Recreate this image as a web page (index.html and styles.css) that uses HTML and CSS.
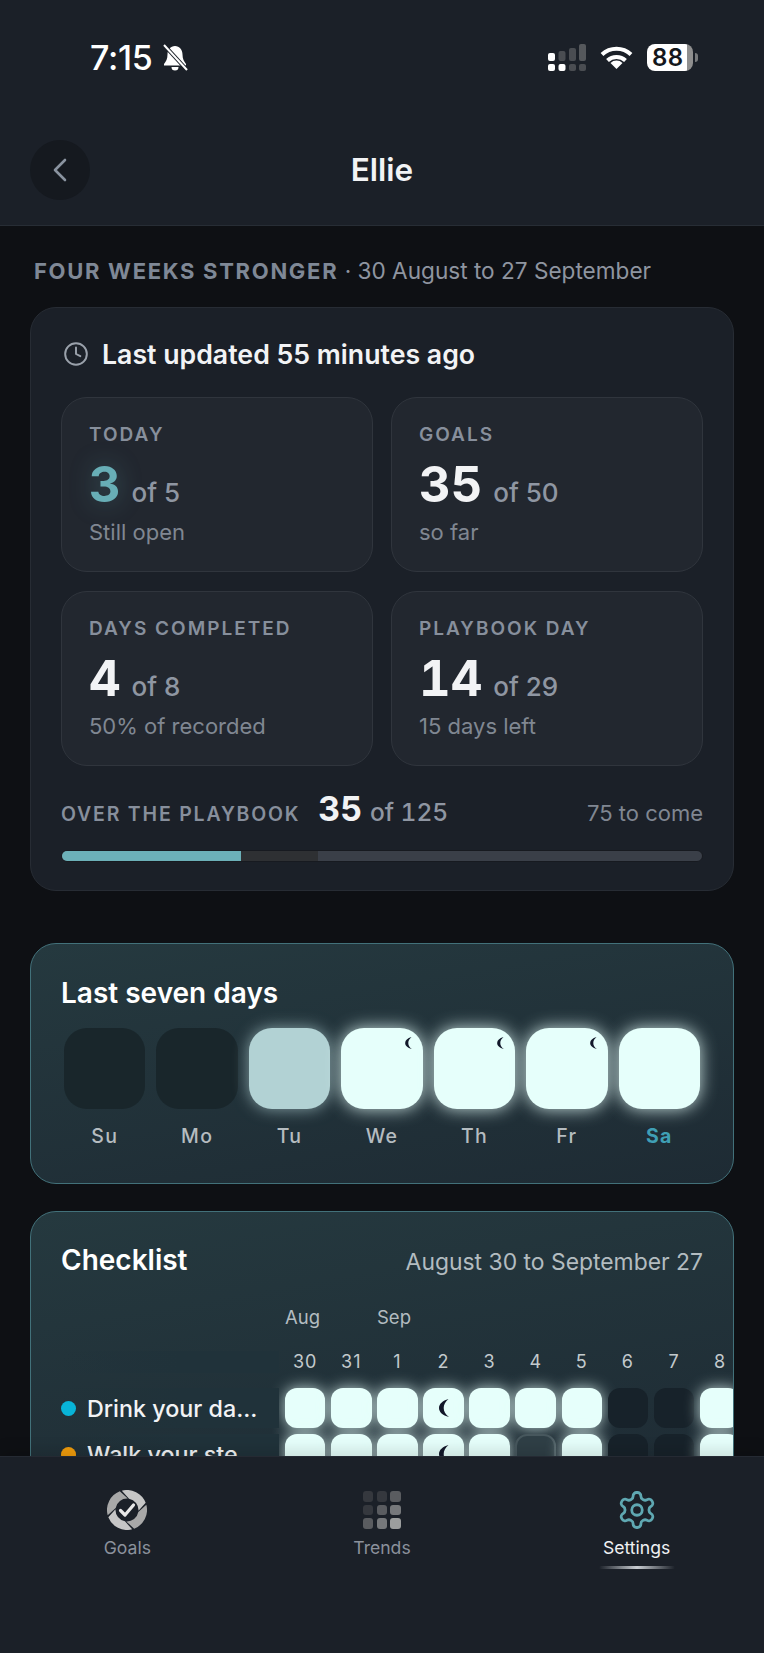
FILE: index.html
```html
<!DOCTYPE html>
<html lang="en">
<head>
  <meta charset="UTF-8">
  <meta name="viewport" content="width=device-width, initial-scale=1.0">
  <title>Ellie</title>
  <link rel="stylesheet" href="styles.css">
</head>
<body>
  <svg class="defs" width="0" height="0">
    <symbol id="moon" viewBox="0 0 10 18">
      <path d="M9.5 0C3.5 1.8 0 5 0 9c0 4 3.500 7.400 10 9-3.600-2.600-5.300-5.600-5.300-9 0-3.400 1.700-6.300 4.800-9z"/>
    </symbol>
  </svg>

  <div class="app">
    <header class="top">
      <div class="status">
        <div class="status-left">
          <span class="time">7:15</span>
          <svg class="bell" viewBox="0 0 26 27">
            <path fill="#fff" d="M13 2C8.500 2 5.500 5.800 5.500 10.500c0 4.500-1.500 6.800-3.500 9.500v1.500h22V20c-2-2.700-3.500-5-3.500-9.500C20.500 5.800 17.500 2 13 2z"/>
            <path fill="#fff" d="M9.500 23h7a3.500 3.500 0 0 1-7 0z"/>
            <path stroke="#1b2028" stroke-width="4" d="M2 1l23 25"/>
            <path stroke="#fff" stroke-width="2" d="M2 1l23 25"/>
          </svg>
        </div>
        <div class="status-right">
          <svg class="signal" viewBox="0 0 38 27">
            <rect x="0" y="9" width="7" height="8" rx="2" fill="#fff"/>
            <rect x="10.500" y="7" width="7" height="10" rx="2" fill="#4a4d52"/>
            <rect x="21" y="4" width="7" height="13" rx="2" fill="#4a4d52"/>
            <rect x="31" y="0" width="7" height="17" rx="2" fill="#55585c"/>
            <rect x="0" y="20" width="7" height="7" rx="2" fill="#fff"/>
            <rect x="10.500" y="20" width="7" height="7" rx="2" fill="#fff"/>
            <rect x="21" y="20" width="7" height="7" rx="2" fill="#4a4d52"/>
            <rect x="31" y="20" width="7" height="7" rx="2" fill="#4a4d52"/>
          </svg>
          <svg class="wifi" viewBox="0 0 33 24" fill="none" stroke="#fff" stroke-width="4">
            <path d="M2 9.500a21 21 0 0 1 29 0"/>
            <path d="M7.500 15.500a13 13 0 0 1 18 0"/>
            <path fill="#fff" stroke="none" d="M16.500 24l-6-6a8.500 8.500 0 0 1 12 0z"/>
          </svg>
          <div class="battery">
            <span class="battery-body">88</span>
            <span class="battery-nub"></span>
          </div>
        </div>
      </div>
      <div class="bar">
        <button class="back">
          <svg width="16" height="24" viewBox="0 0 16 24" fill="none" stroke="#8a93a0" stroke-width="2.600" stroke-linecap="round" stroke-linejoin="round"><path d="M13 2L3 12l10 10"/></svg>
        </button>
        <h1>Ellie</h1>
      </div>
    </header>

    <main class="content">
      <p class="heading"><b>FOUR WEEKS STRONGER</b> · 30 August to 27 September</p>

      <section class="card summary">
        <div class="updated">
          <svg width="26" height="26" viewBox="0 0 24 24" fill="none" stroke="#9aa1ab" stroke-width="1.800" stroke-linecap="round" stroke-linejoin="round"><circle cx="12" cy="12" r="10"/><path d="M12 6v6l4 2"/></svg>
          <span>Last updated 55 minutes ago</span>
        </div>

        <div class="tiles">
          <div class="tile">
            <div class="tile-label">TODAY</div>
            <div class="tile-num"><b class="teal">3</b> of 5</div>
            <div class="tile-sub">Still open</div>
          </div>
          <div class="tile">
            <div class="tile-label">GOALS</div>
            <div class="tile-num"><b>35</b> of 50</div>
            <div class="tile-sub">so far</div>
          </div>
          <div class="tile">
            <div class="tile-label">DAYS COMPLETED</div>
            <div class="tile-num"><b>4</b> of 8</div>
            <div class="tile-sub">50% of recorded</div>
          </div>
          <div class="tile">
            <div class="tile-label">PLAYBOOK DAY</div>
            <div class="tile-num"><b>14</b> of 29</div>
            <div class="tile-sub">15 days left</div>
          </div>
        </div>

        <div class="over">
          <span class="over-label">OVER THE PLAYBOOK</span>
          <span class="over-num"><b>35</b> of 125</span>
          <span class="over-left">75 to come</span>
        </div>
        <div class="progress">
          <div class="progress-fill" style="width: 28%"></div>
          <div class="progress-due" style="width: 12%"></div>
        </div>
      </section>

      <section class="card glass week">
        <h2>Last seven days</h2>
        <div class="days">
          <div class="day"><div class="day-box"></div><span>Su</span></div>
          <div class="day"><div class="day-box"></div><span>Mo</span></div>
          <div class="day"><div class="day-box part"></div><span>Tu</span></div>
          <div class="day"><div class="day-box full"><svg class="moon-small"><use href="#moon"/></svg></div><span>We</span></div>
          <div class="day"><div class="day-box full"><svg class="moon-small"><use href="#moon"/></svg></div><span>Th</span></div>
          <div class="day"><div class="day-box full"><svg class="moon-small"><use href="#moon"/></svg></div><span>Fr</span></div>
          <div class="day today"><div class="day-box full"></div><span>Sa</span></div>
        </div>
      </section>

      <section class="card glass checklist">
        <div class="check-head">
          <h2>Checklist</h2>
          <span>August 30 to September 27</span>
        </div>
        <div class="months"><span class="month-aug">Aug</span><span>Sep</span></div>
        <div class="row dates">
          <div class="row-label"></div>
          <span>30</span><span>31</span><span>1</span><span>2</span><span>3</span><span>4</span><span>5</span><span>6</span><span>7</span><span>8</span>
        </div>
        <div class="row">
          <div class="row-label"><i class="dot blue"></i>Drink your da...</div>
          <div class="cell on"></div><div class="cell on"></div><div class="cell on"></div>
          <div class="cell on"><svg class="moon-big"><use href="#moon"/></svg></div>
          <div class="cell on"></div><div class="cell on"></div><div class="cell on"></div>
          <div class="cell"></div><div class="cell"></div><div class="cell on"></div>
        </div>
        <div class="row">
          <div class="row-label"><i class="dot orange"></i>Walk your ste...</div>
          <div class="cell on"></div><div class="cell on"></div><div class="cell on"></div>
          <div class="cell on"><svg class="moon-big"><use href="#moon"/></svg></div>
          <div class="cell on"></div><div class="cell missed"></div><div class="cell on"></div>
          <div class="cell"></div><div class="cell"></div><div class="cell on"></div>
        </div>
      </section>
    </main>

    <nav class="tabs">
      <div class="tab">
        <svg class="tab-icon" width="40" height="40" viewBox="0 0 40 40">
          <g fill="#c6c6c6" transform="rotate(-15 20 20)">
            <path id="swoosh" d="M20 0A20 20 0 0 1 39.900 17.900L30.900 23.700A11.500 11.500 0 0 0 24.900 9.600z"/>
            <use href="#swoosh" transform="rotate(90 20 20)" fill="#a8a8a8"/>
            <use href="#swoosh" transform="rotate(180 20 20)"/>
            <use href="#swoosh" transform="rotate(270 20 20)" fill="#a8a8a8"/>
          </g>
          <path d="M13.500 20.500l4.500 4.500 8.500-10" fill="none" stroke="#e8e8e8" stroke-width="3.200" stroke-linecap="round" stroke-linejoin="round"/>
        </svg>
        <span>Goals</span>
      </div>
      <div class="tab">
        <div class="tab-icon heat">
          <i class="h1"></i><i class="h1"></i><i class="h3"></i>
          <i class="h1"></i><i class="h3"></i><i class="h4"></i>
          <i class="h3"></i><i class="h4"></i><i class="h5"></i>
        </div>
        <span>Trends</span>
      </div>
      <div class="tab active">
        <svg class="tab-icon" width="42" height="40" viewBox="0 1 24 22" fill="none" stroke="#5fa8b2" stroke-width="1.600" stroke-linecap="round" stroke-linejoin="round">
          <path d="M12.220 2h-.44a2 2 0 0 0-2 2v.18a2 2 0 0 1-1 1.730l-.43.250a2 2 0 0 1-2 0l-.15-.08a2 2 0 0 0-2.730.730l-.22.380a2 2 0 0 0 .730 2.730l.15.100a2 2 0 0 1 1 1.720v.510a2 2 0 0 1-1 1.740l-.15.090a2 2 0 0 0-.730 2.730l.22.380a2 2 0 0 0 2.730.730l.15-.08a2 2 0 0 1 2 0l.43.250a2 2 0 0 1 1 1.730V20a2 2 0 0 0 2 2h.44a2 2 0 0 0 2-2v-.18a2 2 0 0 1 1-1.730l.43-.25a2 2 0 0 1 2 0l.15.080a2 2 0 0 0 2.730-.73l.22-.39a2 2 0 0 0-.73-2.730l-.15-.08a2 2 0 0 1-1-1.740v-.5a2 2 0 0 1 1-1.740l.15-.09a2 2 0 0 0 .73-2.730l-.22-.38a2 2 0 0 0-2.730-.73l-.15.080a2 2 0 0 1-2 0l-.43-.25a2 2 0 0 1-1-1.730V4a2 2 0 0 0-2-2z"/>
          <circle cx="12" cy="12" r="3"/>
        </svg>
        <span>Settings</span>
        <div class="tab-line"></div>
      </div>
    </nav>
  </div>
</body>
</html>
```

FILE: styles.css
```css
* { box-sizing: border-box; }
body { margin: 0; background: #0e1014; font-family: Inter, "Liberation Sans", sans-serif; color: #f2f3f5; }
h1, h2, p { margin: 0; }
.defs { display: block; height: 0; }
.app { height: 1653px; display: flex; flex-direction: column; overflow: hidden; }

/* top */
.top { height: 226px; background: #1b2028; border-bottom: 1px solid #272d35; flex: none; }
.status { height: 114px; padding: 0 66px 0 90px; display: flex; justify-content: space-between; align-items: center; }
.status-left { display: flex; align-items: center; gap: 9px; }
.time { font-size: 34px; font-weight: 500; letter-spacing: -0.3px; color: #fff; }
.bell { width: 26px; height: 27px; }
.status-right { display: flex; align-items: center; }
.signal { width: 38px; height: 27px; margin-right: 14px; }
.wifi { width: 33px; height: 24px; margin-right: 14px; }
.battery { display: flex; align-items: center; gap: 2px; }
.battery-body { width: 46px; height: 27px; border-radius: 8px; background: linear-gradient(to right, #fff 86%, #8f8f8f 86%); color: #14171c; font-size: 24px; font-weight: 600; line-height: 27px; padding-left: 5px; letter-spacing: 0.5px; }
.battery-nub { width: 3px; height: 9px; border-radius: 0 3px 3px 0; background: #77797c; }

.bar { height: 111px; padding: 0 30px; display: grid; grid-template-columns: 60px 1fr 60px; align-items: center; }
.bar h1 { font-size: 31.500px; font-weight: 600; text-align: center; }
.back { width: 60px; height: 60px; border-radius: 50%; border: none; padding: 0; background: #15191f; display: flex; align-items: center; justify-content: center; }

/* content */
.content { flex: 1; min-height: 0; overflow: hidden; padding: 33px 30px 0; }
.heading { font-size: 22.600px; line-height: 24px; color: #8f95a0; margin-left: 4px; margin-bottom: 24px; }
.heading b { font-size: 22px; color: #7f8896; font-weight: 700; letter-spacing: 1.700px; }

.card { background: #1b2028; border: 1px solid #272c34; border-radius: 26px; padding: 31px 30px 28px; }
.updated { display: flex; align-items: center; gap: 13px; height: 30px; padding-left: 2px; font-size: 26.700px; font-weight: 600; }
.tiles { display: grid; grid-template-columns: 1fr 1fr; grid-auto-rows: 175px; gap: 19px 18px; margin-top: 28px; }
.tile { background: #22272f; border: 1px solid #30353d; border-radius: 26px; padding: 26px 27px 0; }
.tile-label { font-size: 19px; line-height: 22px; font-weight: 600; letter-spacing: 2px; color: #878f9c; }
.tile-num { margin-top: 14px; height: 50px; line-height: 50px; font-size: 26px; font-weight: 500; color: #8f96a2; }
.tile-num b { font-size: 49px; font-weight: 700; color: #f2f3f5; margin-right: 4px; font-variant-numeric: tabular-nums; }
.tile-num .teal { color: #68aeb6; text-shadow: 0 0 24px rgba(104, 174, 182, 0.35); }
.tile-sub { margin-top: 9px; font-size: 22px; line-height: 26px; color: #808792; }

.over { margin-top: 23px; display: flex; align-items: baseline; }
.over-label { font-size: 19.500px; font-weight: 600; letter-spacing: 1.800px; color: #878f9c; }
.over-num { margin-left: 18px; font-size: 24.500px; font-weight: 500; line-height: 40px; color: #8f96a2; font-variant-numeric: tabular-nums; }
.over-num b { font-size: 34px; font-weight: 700; color: #f2f3f5; margin-right: 1px; }
.over-left { margin-left: auto; font-size: 22px; color: #808792; }

.progress { margin-top: 18px; height: 12px; display: flex; background: #3a3f48; border: 1px solid #171a20; border-radius: 6px; overflow: hidden; }
.progress-fill { background: #6cb0b8; }
.progress-due { background: #2e3033; }

/* glass cards */
.glass { background: linear-gradient(170deg, #25393f, #1e2b34); border-color: #42717a; }
.glass h2 { font-size: 28px; line-height: 32px; font-weight: 600; color: #fff; }

.week { margin-top: 52px; height: 241px; padding-top: 33px; }
.days { display: grid; grid-template-columns: repeat(7, 1fr); gap: 11px; margin: 19px 3px 0; }
.day { text-align: center; font-size: 19.500px; line-height: 24px; font-weight: 500; letter-spacing: 1.300px; color: #b5bcc0; }
.day span { display: block; margin-top: 15px; }
.day-box { height: 81px; border-radius: 23px; background: #19262b; position: relative; }
.day-box.part { background: #b2d2d4; box-shadow: 0 0 16px rgba(178, 210, 212, 0.7); }
.day-box.full { background: #e6fffb; box-shadow: 0 0 17px rgba(230, 255, 251, 0.85); }
.day.today { color: #3f9fb5; font-weight: 700; }
.moon-small { position: absolute; top: 9px; right: 11px; width: 7px; height: 12px; fill: #12182a; }

.checklist { margin-top: 27px; padding-top: 32px; overflow: hidden; padding-right: 0; }
.check-head { display: flex; justify-content: space-between; align-items: baseline; padding-right: 30px; }
.check-head span { font-size: 22.900px; color: #b3bcc0; }
.months { display: flex; margin: 31px 0 0 224px; font-size: 18.500px; line-height: 20px; color: #b3bcc0; }
.month-aug { width: 92px; }
.row { display: flex; gap: 5.600px; width: max-content; }
.row + .row { margin-top: 6px; }
.row.dates { margin-top: 24px; margin-bottom: 15px; font-size: 18px; line-height: 22px; letter-spacing: 1px; color: #c3cacd; }
.dates span { width: 40.500px; text-align: center; }
.row-label { width: 218.400px; display: flex; align-items: center; gap: 11px; font-size: 23.300px; font-weight: 500; color: #f2f3f5; background: linear-gradient(to right, transparent, #20323a 55%); position: relative; z-index: 1; white-space: nowrap; }
.dot { width: 15px; height: 15px; border-radius: 50%; flex: none; }
.dot.blue { background: #08b4d8; }
.dot.orange { background: #f09c0c; }
.cell { width: 40.500px; height: 40px; border-radius: 12px; background: #17222a; display: flex; align-items: center; justify-content: center; }
.cell.on { background: #e6fffb; box-shadow: 0 0 15px rgba(230, 255, 251, 0.8); }
.cell.missed { background: #2f3f46; border: 2px solid #47575d; }
.moon-big { width: 10px; height: 18px; fill: #12182a; }

/* bottom tabs */
.tabs { height: 197px; flex: none; position: relative; z-index: 2; background: #1b2028; border-top: 1px solid #252a33; box-shadow: 0 -6px 14px rgba(0, 0, 0, 0.12); padding-top: 33px; display: grid; grid-template-columns: repeat(3, 1fr); }
.tab { display: flex; flex-direction: column; align-items: center; font-size: 17.600px; line-height: 24px; color: #8b919c; }
.tab-icon { height: 40px; display: block; margin-bottom: 6px; }
.tab.active { color: #f0f1f3; }
.heat { width: 38px; display: grid; grid-template-columns: repeat(3, 10.500px); grid-auto-rows: 10.500px; gap: 3px; align-content: center; justify-content: space-between; }
.heat i { border-radius: 3px; }
.h1 { background: #35383e; }
.h3 { background: #5a5c60; }
.h4 { background: #76787b; }
.h5 { background: #9c9e9e; }
.tab-line { width: 76px; height: 3px; margin-top: 6px; border-radius: 2px; background: linear-gradient(to right, transparent, #c9cdd2 50%, transparent); }
```
